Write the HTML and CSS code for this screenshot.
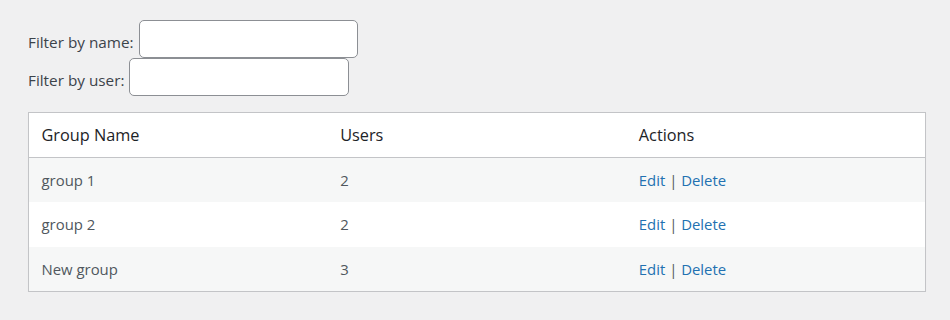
FILE: index.html
```html
<!DOCTYPE html>
<html lang="en">
<head>
<meta charset="utf-8">
<title>Groups</title>
<link rel="stylesheet" href="styles.css">
</head>
<body>
<div class="wrap">
  <form class="filters">
    <div class="filter-row">
      <label for="fname">Filter by name:</label>
      <input type="text" id="fname" class="filter-input">
    </div>
    <div class="filter-row">
      <label for="fuser">Filter by user:</label>
      <input type="text" id="fuser" class="filter-input">
    </div>
  </form>
  <table class="groups">
    <thead>
      <tr><th>Group Name</th><th>Users</th><th>Actions</th></tr>
    </thead>
    <tbody>
      <tr><td>group 1</td><td>2</td><td><a href="#">Edit</a> | <a href="#">Delete</a></td></tr>
      <tr><td>group 2</td><td>2</td><td><a href="#">Edit</a> | <a href="#">Delete</a></td></tr>
      <tr><td>New group</td><td>3</td><td><a href="#">Edit</a> | <a href="#">Delete</a></td></tr>
    </tbody>
  </table>
</div>
</body>
</html>
```

FILE: styles.css
```css
html, body {
  margin: 0;
  padding: 0;
  background: #f0f0f1;
}
body {
  font-family: "Open Sans", "Noto Sans", sans-serif;
  color: #3c434a;
  font-size: 15px;
}
.wrap {
  padding: 20px 24px 0 28px;
}
.filters {
  margin: 0 0 16px 0;
}
.filter-row {
  display: flex;
  align-items: flex-end;
  height: 38px;
}
.filter-row label {
  font-size: 15.3px;
  line-height: 20px;
  padding-bottom: 6.5px;
  margin-right: 5px;
  color: #3c434a;
}
.filter-input {
  box-sizing: border-box;
  width: 219.5px;
  height: 37.5px;
  margin: 0;
  padding: 0 10px;
  border: 1px solid #8c8f94;
  border-radius: 5px;
  background: #fff;
  font: inherit;
  margin-bottom: 0.5px;
}
.groups {
  width: 898px;
  border: 1px solid #c3c4c7;
  border-spacing: 0;
  background: #fff;
  table-layout: fixed;
  box-shadow: 0 1px 1px rgba(0,0,0,.04);
}
.groups th,
.groups td {
  text-align: left;
  padding: 0 12.5px;
  vertical-align: middle;
}
.groups th {
  font-weight: 400;
  font-size: 16.3px;
  color: #1d2327;
  height: 44px;
  border-bottom: 1px solid #c3c4c7;
}
.groups td {
  font-size: 14.9px;
  color: #50575e;
  height: 44.33px;
}
.groups tbody tr:nth-child(odd) {
  background: #f6f7f7;
}
.groups a {
  color: #2271b1;
  text-decoration: none;
}
```
